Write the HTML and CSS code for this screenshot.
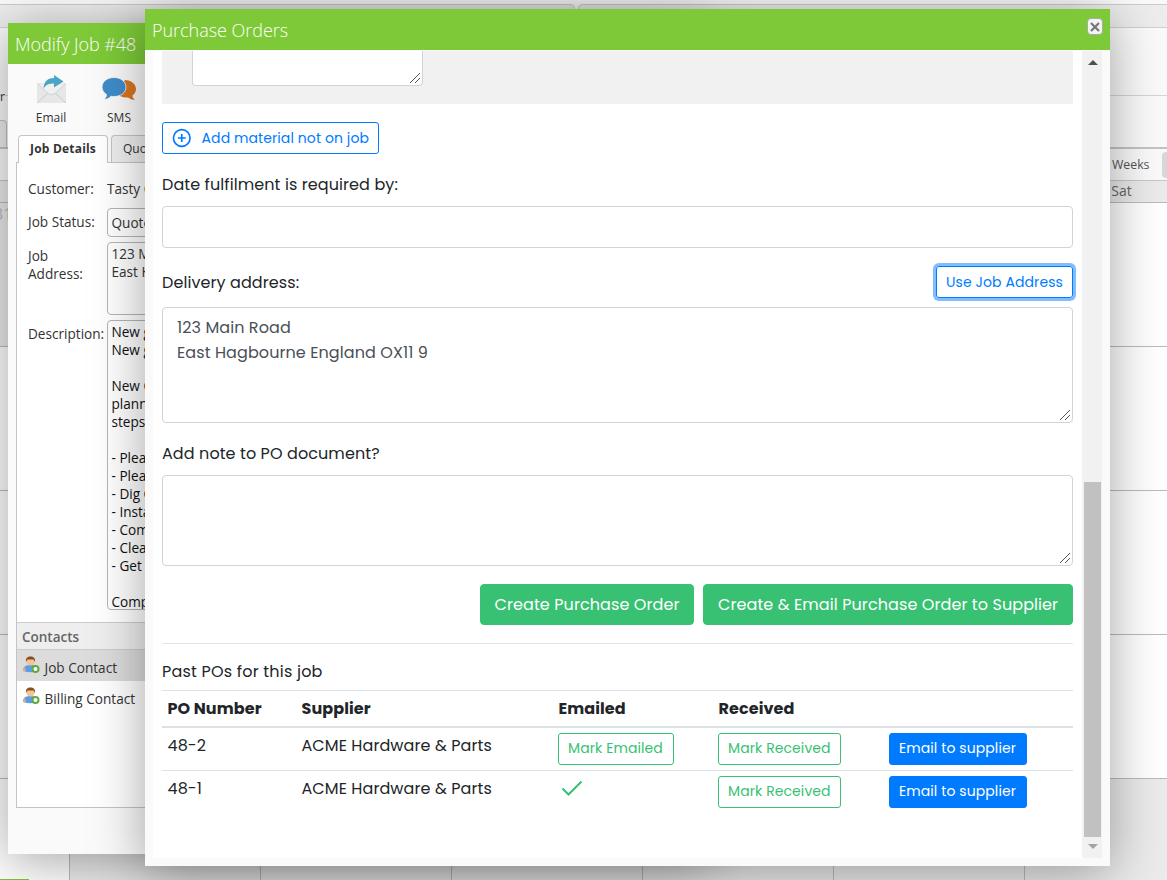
FILE: index.html
```
<!DOCTYPE html>
<html lang="en">
<head>
    <meta charset="utf-8">
    <title>Purchase Orders</title>
    <link rel="stylesheet" href="styles.css">
</head>
<body>
    <!-- Calendar page behind the windows -->
    <div class="calendar">
        <div class="cal-top"></div>
        <div class="cal-nav"><div class="nav-left"></div><div class="nav-right"></div></div>
        <div class="cal-tools"><span>r</span></div>
        <div class="cal-tabs"><div class="cal-tab"></div></div>
        <div class="cal-views"><span>Weeks</span><div class="view-btn"></div></div>
        <div class="cal-days">
            <div></div><div></div><div></div><div></div><div></div><div></div><div>Sat</div>
        </div>
        <div class="cal-grid">
            <div class="other first">31</div><div></div><div></div><div></div><div></div><div></div><div></div>
            <div></div><div></div><div></div><div></div><div></div><div></div><div></div>
            <div></div><div></div><div></div><div></div><div></div><div></div><div></div>
            <div></div><div></div><div></div><div></div><div></div><div></div><div></div>
            <div class="booked"><i></i></div><div class="other"></div><div class="other"></div><div class="other"></div><div class="other"></div><div class="other"></div><div class="other"></div>
        </div>
    </div>

    <!-- Modify Job window -->
    <div class="window job-window">
        <div class="title-bar">Modify Job #48</div>
        <div class="job-tools">
            <div class="job-tool">
                <svg width="32" height="32" viewBox="0 0 32 32">
                    <path d="M2 11h29v20H2z" fill="#e6e7e8"/>
                    <path d="M2 31l12-11q2.500-1.500 5 0l12 11" fill="none" stroke="#c9cacc" stroke-width="1"/>
                    <path d="M2.500 11.500l10.500 10q3.500 2.500 7 0l10.500-10" fill="#f0f0f0" stroke="#d0d1d2" stroke-width="1"/>
                    <path d="M8.500 16.500C9 9 13 6 19 6V3l9.500 6.500L19 15.500v-4C14 11.500 11 12.500 8.500 16.500z" fill="#4aa5c6"/>
                </svg>
                Email
            </div>
            <div class="job-tool">
                <svg width="36" height="32" viewBox="0 0 36 32">
                    <path d="M24 8c6 0 11 4 11 9 0 3-1.500 5-3.500 6.500 0 2 1 3 2.500 4-3 .5-5-.5-7-2-5 .5-9-1-11-5z" fill="#d87520"/>
                    <path d="M13 5.500C19.500 5.500 25 9.500 25 15s-5 9.500-12 9.500c-1 0-2 0-3-.3C8 26.500 5.500 27.500 3 27c2-1.500 2.500-3 2.500-4.500C2.500 20.500 1 18 1 15c0-5.500 5.500-9.500 12-9.500z" fill="#3e8dcc" stroke="#fafafa" stroke-width=".8"/>
                </svg>
                SMS
            </div>
        </div>
        <div class="tabs">
            <div class="tab active">Job Details</div>
            <div class="tab">Quo</div>
        </div>
        <div class="job-body">
            <div class="job-form">
                <label>Customer:</label><div class="plain">Tasty C</div>
                <label>Job Status:</label><div class="box status">Quote</div>
                <label>Job Address:</label><div class="box address">123 M
East H</div>
                <label>Description:</label>
                <div class="box description">New g
New g

New G
plann
steps

- Plea
- Plea
- Dig O
- Insta
- Com
- Clea
- Get

Comp</div>
            </div>
            <div class="contacts-head">Contacts</div>
            <div class="contact selected">
                <svg class="person" width="18" height="18" viewBox="0 0 18 18">
                    <path d="M1 15c0-4 2-6 7.500-6S15 11 15 15q-6 2.500-14 0z" fill="#5a9fe6"/>
                    <path d="M1 15q-1-2 2-4l1 4z" fill="#e2ab75"/>
                    <circle cx="8.500" cy="5.500" r="4" fill="#f2c592"/>
                    <path d="M4 6C3.500 2 5.500.5 8.500.5S13.500 2 13 6L11.500 3.500h-6z" fill="#8b4d1c"/>
                    <circle cx="13.500" cy="13" r="4" fill="#62a744"/>
                    <circle cx="13.500" cy="13" r="2" fill="#fff"/>
                </svg>
                Job Contact
            </div>
            <div class="contact">
                <svg class="person" width="18" height="18" viewBox="0 0 18 18">
                    <path d="M1 15c0-4 2-6 7.500-6S15 11 15 15q-6 2.500-14 0z" fill="#5a9fe6"/>
                    <path d="M1 15q-1-2 2-4l1 4z" fill="#e2ab75"/>
                    <circle cx="8.500" cy="5.500" r="4" fill="#f2c592"/>
                    <path d="M4 6C3.500 2 5.500.5 8.500.5S13.500 2 13 6L11.500 3.500h-6z" fill="#8b4d1c"/>
                    <circle cx="13.500" cy="13" r="4" fill="#62a744"/>
                    <circle cx="13.500" cy="13" r="2" fill="#fff"/>
                </svg>
                Billing Contact
            </div>
        </div>
    </div>

    <!-- Purchase Orders window -->
    <div class="window po-window">
        <div class="title-bar">
            Purchase Orders
            <div class="close">
                <svg width="10" height="10" viewBox="0 0 10 10"><path d="M1 1l8 8M9 1L1 9" stroke="#777" stroke-width="2.200"/></svg>
            </div>
        </div>
        <div class="po-scroll">
            <div class="po-content">
                <div class="materials"><div class="material-note"><svg class="grip" width="12" height="12" viewBox="0 0 12 12"><path d="M1 11L11 1M6 11l5-5"/></svg></div></div>
                <div class="btn btn-outline-primary add-material">
                    <svg width="20" height="20" viewBox="0 0 20 20" fill="none" stroke="#007bff" stroke-width="1.700"><circle cx="10" cy="10" r="8.500"/><path d="M10 6v8M6 10h8"/></svg>
                    <span>Add material not on job</span>
                </div>
                <div class="label date-label"><span>Date fulfilment is required by:</span></div>
                <div class="control date"></div>
                <div class="label delivery-label">
                    <span>Delivery address:</span>
                    <div class="btn btn-outline-primary focus"><span>Use Job Address</span></div>
                </div>
                <div class="control delivery">123 Main Road<br>East Hagbourne England OX11 9<svg class="grip" width="12" height="12" viewBox="0 0 12 12"><path d="M1 11L11 1M6 11l5-5"/></svg></div>
                <div class="label note-label"><span>Add note to PO document?</span></div>
                <div class="control note"><svg class="grip" width="12" height="12" viewBox="0 0 12 12"><path d="M1 11L11 1M6 11l5-5"/></svg></div>
                <div class="actions">
                    <div class="btn btn-success create">Create Purchase Order</div>
                    <div class="btn btn-success create-email">Create &amp; Email Purchase Order to Supplier</div>
                </div>
                <div class="past-title">Past POs for this job</div>
                <table class="past">
                    <colgroup><col class="c1"><col class="c2"><col class="c3"><col class="c4"><col></colgroup>
                    <tr><th>PO Number</th><th>Supplier</th><th>Emailed</th><th>Received</th><th></th></tr>
                    <tr>
                        <td>48-2</td>
                        <td>ACME Hardware &amp; Parts</td>
                        <td><div class="btn btn-outline-success emailed">Mark Emailed</div></td>
                        <td><div class="btn btn-outline-success received">Mark Received</div></td>
                        <td><div class="btn btn-primary">Email to supplier</div></td>
                    </tr>
                    <tr>
                        <td>48-1</td>
                        <td>ACME Hardware &amp; Parts</td>
                        <td><svg class="tick" width="26" height="24" viewBox="0 0 26 24"><path d="M3.500 12.500l6 6L22.500 5.500" fill="none" stroke="#38c172" stroke-width="2"/></svg></td>
                        <td><div class="btn btn-outline-success received">Mark Received</div></td>
                        <td><div class="btn btn-primary">Email to supplier</div></td>
                    </tr>
                </table>
            </div>
            <div class="scrollbar">
                <div class="arrow-up"></div>
                <div class="thumb"></div>
                <div class="arrow-down"></div>
            </div>
        </div>
    </div>
</body>
</html>
```
FILE: styles.css
```
* {
    box-sizing: border-box;
}

body {
    margin: 0;
    width: 1167px;
    height: 880px;
    overflow: hidden;
    position: relative;
    background: #fff;
    font-family: "Open Sans", sans-serif;
    font-size: 14px;
    color: #333;
}

/* calendar */
.calendar {
    height: 880px;
    overflow: hidden;
}

.cal-top {
    height: 4px;
    background: #fafafa;
}

.cal-nav {
    height: 24px;
    background: #fafafa;
    border-bottom: 1px solid #d0d0d0;
    display: flex;
    gap: 3px;
}

.nav-left,
.nav-right {
    background: #ededed;
    border-top: 1px solid #ccc;
}

.nav-left {
    width: 575px;
    border-right: 1px solid #ccc;
    border-radius: 0 5px 0 0;
}

.nav-right {
    flex: 1;
    border-left: 1px solid #ccc;
    border-radius: 5px 0 0 0;
}

.cal-tools {
    height: 68px;
    background: #fafafa;
    border-bottom: 1px solid #d5d5d5;
    display: flex;
    align-items: flex-end;
    font-size: 12px;
}

.cal-tools span {
    margin-bottom: -10px;
}

.cal-tabs {
    height: 53px;
    background: #fafafa;
    border-bottom: 2px solid #c4c4c4;
    padding-top: 24px;
}

.cal-tab {
    width: 7px;
    height: 27px;
    background: #eee;
    border: 1px solid #c4c4c4;
    border-left: 0;
    border-bottom: 0;
    border-radius: 0 4px 0 0;
}

.cal-views {
    height: 32px;
    background: #fafafa;
    border-bottom: 1px solid #c8c8c8;
    display: flex;
    align-items: center;
    padding-left: 1112px;
    font-size: 12.300px;
    color: #555;
}

.view-btn {
    flex: none;
    width: 40px;
    height: 26px;
    margin-left: 12px;
    background: #d8d8d8;
    border-radius: 4px;
}

.cal-days,
.cal-grid {
    display: grid;
    grid-template-columns: repeat(7, 191px);
    margin-left: -121px;
}

.cal-days {
    width: 1337px;
    height: 22px;
    line-height: 20px;
    background: #ebebeb;
    border-bottom: 1px solid #bbb;
    text-align: center;
    padding-left: 1px;
    color: #666;
}

.cal-grid {
    grid-auto-rows: 144px;
}

.cal-grid > div {
    border-right: 1px solid #bbb;
    border-bottom: 1px solid #bbb;
    background: #fff;
}

.cal-grid .other {
    background: #ebebeb;
}

.cal-grid .first {
    padding-left: 115px;
    font-size: 16px;
    color: #bbb;
}

.booked i {
    display: block;
    width: 150px;
    height: 20px;
    margin-top: 100px;
    background: #7dc938;
}

/* windows */
.window {
    position: absolute;
    background: #fafafa;
    box-shadow: 0 7px 50px rgba(0, 0, 0, .36);
}

.title-bar {
    height: 41px;
    background: #7dc938;
    color: #fff;
    font-size: 18px;
    font-weight: 300;
    line-height: 42px;
    padding-left: 7px;
    white-space: nowrap;
    letter-spacing: -.03px;
}

.job-window {
    left: 8px;
    top: 23px;
    width: 700px;
    height: 831px;
}

.job-tools {
    height: 71px;
    display: flex;
    padding: 8px 0 0 9px;
}

.job-tool {
    width: 68px;
    display: flex;
    flex-direction: column;
    align-items: center;
    font-size: 12px;
    line-height: 28px;
}

.tabs {
    display: flex;
    gap: 3px;
    height: 28px;
    padding-left: 10px;
    position: relative;
    font-size: 12px;
}

.tab {
    height: 27px;
    padding: 0 11px;
    line-height: 25px;
    border: 1px solid #c4c4c4;
    border-bottom: 0;
    border-radius: 4px 4px 0 0;
    background: #eee;
    white-space: nowrap;
}

.tab.active {
    width: 90px;
    height: 28px;
    background: #fff;
    font-weight: bold;
    letter-spacing: .2px;
}

.job-body {
    width: 676px;
    height: 646px;
    margin: -1px 0 0 8px;
    border: 1px solid #c4c4c4;
    background: #fff;
}

.job-form {
    display: grid;
    grid-template-columns: 79px 400px;
    grid-template-rows: 28px 29px 73px 290px;
    row-gap: 5px;
    height: 459px;
    padding: 12px 0 0 11px;
    line-height: 18px;
    font-size: 13.600px;
}

.job-form label {
    padding: 5px 12px 0 0;
}

.plain {
    padding-top: 5px;
}

.box {
    border: 1px solid #b5b5b5;
    border-radius: 4px;
    padding: 2px 3.500px;
    overflow: hidden;
    white-space: pre-line;
}

.status {
    padding-top: 5px;
}

.description {
    color: #111;
}

.contacts-head {
    height: 28px;
    background: #eee;
    border-top: 1px solid #ccc;
    border-bottom: 1px solid #ccc;
    padding-left: 5px;
    line-height: 28px;
    font-size: 13.500px;
    font-weight: 600;
    color: #666;
}

.contact {
    height: 31px;
    display: flex;
    align-items: center;
    gap: 5px;
    padding: 3px 0 0 4.500px;
    font-size: 13.600px;
}

.contact.selected {
    background: #dcdcdc;
}

.person {
    margin-top: -5px;
}

/* purchase orders */
.po-window {
    left: 145px;
    top: 9px;
    width: 965px;
    height: 857px;
}

.po-window .title-bar {
    display: flex;
    justify-content: space-between;
    padding-right: 7px;
}

.close {
    width: 16px;
    height: 17px;
    margin-top: 9px;
    background: #f4f4f4;
    border: 1px solid #aaa;
    border-radius: 4px;
    display: flex;
    align-items: center;
    justify-content: center;
}

.po-scroll {
    display: flex;
    height: 807px;
    margin: 1px 8px 8px;
    background: #fff;
    font-family: "Poppins", "Inter", sans-serif;
    font-size: 16px;
    letter-spacing: .09px;
    color: #212529;
}

.po-content {
    width: 929px;
    padding: 0 9px;
}

.materials {
    height: 53px;
    background: #f1f1f1;
    padding-left: 30px;
}

.material-note {
    position: relative;
    width: 231px;
    height: 35px;
    background: #fff;
    border: 1px solid #ced4da;
    border-top: 0;
    border-radius: 0 0 4px 4px;
}

.grip {
    position: absolute;
    right: 1px;
    bottom: 1px;
    fill: none;
    stroke: #555;
    stroke-width: 1;
}

.btn {
    display: inline-flex;
    align-items: center;
    height: 32px;
    padding: 0 9px;
    border: 1px solid;
    border-radius: 3px;
    font-size: 14px;
    white-space: nowrap;
    flex: none;
}

.btn-outline-primary {
    color: #007bff;
    border-color: #007bff;
}

.btn-primary {
    background: #007bff;
    border-color: #007bff;
    color: #fff;
    width: 138px;
}

.btn-outline-success {
    color: #38c172;
    border-color: #38c172;
}

.btn-success {
    background: #38c172;
    border-color: #38c172;
    color: #fff;
    font-size: 16px;
    height: 41px;
    padding: 0 13.500px;
    border-radius: 4px;
}

.focus {
    width: 137px;
    box-shadow: 0 0 0 3px rgba(0, 123, 255, .5);
}

.add-material {
    display: flex;
    gap: 10px;
    width: 217px;
    margin-top: 18px;
}

.label {
    display: flex;
    align-items: center;
    justify-content: space-between;
}

.date-label,
.note-label {
    height: 52px;
    padding-top: 8px;
}

.delivery-label {
    height: 59px;
    padding-top: 9px;
}

.control {
    position: relative;
    border: 1px solid #ced4da;
    border-radius: 4px;
    color: #495057;
    line-height: 25px;
    padding: 7px 14px;
}

.date {
    height: 42px;
}

.delivery {
    height: 116px;
}

.note {
    height: 91px;
}

.actions {
    display: flex;
    justify-content: flex-end;
    gap: 9px;
    padding: 18px 0;
    border-bottom: 1px solid #e5e5e5;
}

.create {
    width: 214px;
}

.create-email {
    width: 370px;
    padding-left: 14px;
}

.past-title {
    height: 46px;
    padding-top: 15px;
    line-height: 25px;
    letter-spacing: .2px;
}

.past {
    width: 911px;
    table-layout: fixed;
    border-collapse: collapse;
}

.c1 { width: 134px; }
.c2 { width: 257px; }
.c3 { width: 160px; }
.c4 { width: 171px; }

.past th,
.past td {
    height: 43.500px;
    padding: 5px 5px 0 5.500px;
    border-top: 1px solid #dee2e6;
    vertical-align: top;
    text-align: left;
    line-height: 25px;
}

.past th {
    height: 36px;
    border-bottom: 2px solid #dee2e6;
}

.past .btn {
    margin-left: -.5px;
}

.emailed {
    width: 116px;
}

.received {
    width: 123px;
}

.scrollbar {
    width: 20px;
    background: #f1f1f1;
    display: flex;
    flex-direction: column;
    padding: 9px 1px 9px 2px;
}

.thumb {
    height: 355px;
    margin-top: 417px;
    background: #c1c1c1;
}

.arrow-up,
.arrow-down {
    width: 0;
    margin: 0 auto;
    border: 5px solid transparent;
    border-top: 0;
    border-bottom: 5px solid #505050;
}

.arrow-down {
    margin-top: 7px;
    border-top: 5px solid #a3a3a3;
    border-bottom: 0;
}
```
